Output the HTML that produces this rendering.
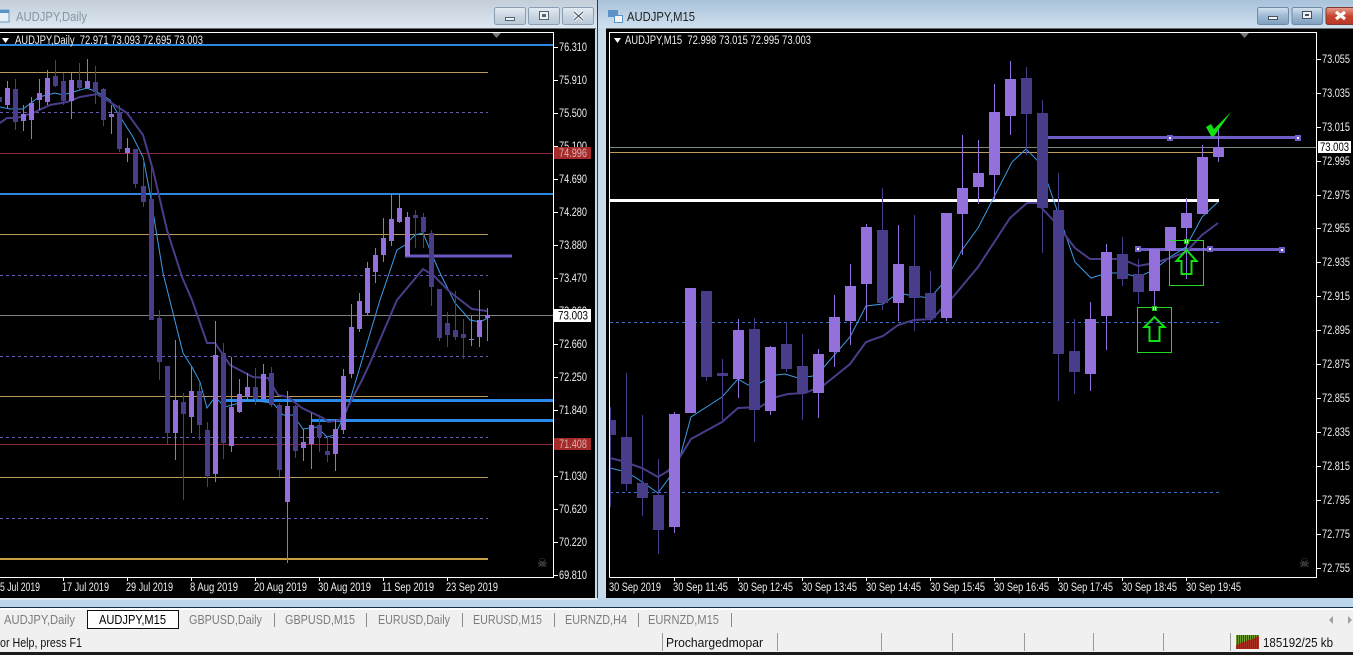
<!DOCTYPE html>
<html><head><meta charset="utf-8"><title>AUDJPY</title>
<style>
html,body{margin:0;padding:0;background:#000;width:1353px;height:655px;overflow:hidden}
svg{display:block;font-family:"Liberation Sans",sans-serif}
.p{font-size:11.5px;fill:#eeeeee}
.tab{font-size:13px;fill:#7c7c7c}
</style></head><body>
<svg width="1353" height="655" viewBox="0 0 1353 655" xmlns="http://www.w3.org/2000/svg">
<defs>
<linearGradient id="tl" x1="0" y1="0" x2="0" y2="1"><stop offset="0" stop-color="#c3ced9"/><stop offset="1" stop-color="#dce7f1"/></linearGradient>
<linearGradient id="tr" x1="0" y1="0" x2="0" y2="1"><stop offset="0" stop-color="#a9c2da"/><stop offset="1" stop-color="#cfe0ef"/></linearGradient>
<linearGradient id="bl" x1="0" y1="0" x2="0" y2="1"><stop offset="0" stop-color="#e4ecf3"/><stop offset=".5" stop-color="#c9d6e2"/><stop offset="1" stop-color="#b9c9d8"/></linearGradient>
<linearGradient id="br" x1="0" y1="0" x2="0" y2="1"><stop offset="0" stop-color="#d5e3f0"/><stop offset=".5" stop-color="#9fb9d2"/><stop offset="1" stop-color="#7f9fbf"/></linearGradient>
<linearGradient id="cl" x1="0" y1="0" x2="0" y2="1"><stop offset="0" stop-color="#e8a090"/><stop offset=".5" stop-color="#c8452f"/><stop offset="1" stop-color="#b8382a"/></linearGradient>
<clipPath id="cL"><rect x="0" y="33" width="554" height="544"/></clipPath>
<clipPath id="cR"><rect x="610" y="33" width="706" height="544"/></clipPath>
</defs>

<!-- window chrome -->
<rect width="1353" height="655" fill="#c6daec"/>
<rect x="0" y="0" width="597" height="28" fill="url(#tl)"/>
<rect x="598" y="0" width="755" height="28" fill="url(#tr)"/>
<rect x="0" y="28" width="596" height="1" fill="#6d6d6d"/>
<rect x="606" y="28" width="747" height="1" fill="#6d6d6d"/>
<rect x="597" y="0" width="1" height="607" fill="#2b3a44"/>
<rect x="0" y="29" width="595" height="569" fill="#000"/>
<rect x="606" y="29" width="747" height="569" fill="#000"/>
<rect x="0" y="598" width="1353" height="9" fill="#bcd5ea"/>
<rect x="0" y="598" width="597" height="2" fill="#dfe9f2"/>
<rect x="0" y="607" width="1353" height="1" fill="#10303c"/>
<rect x="0" y="608" width="1353" height="2" fill="#fff"/>
<rect x="0" y="610" width="1353" height="20" fill="#f0f0f0"/>
<rect x="0" y="630" width="1353" height="23" fill="#f0f0f0"/>
<rect x="0" y="652" width="1353" height="3" fill="#1c1c1c"/>

<!-- title bars -->
<g>
<rect x="-3" y="10" width="12" height="12" fill="#e8f0f8" stroke="#6f9cc8"/>
<rect x="-3" y="10" width="12" height="3" fill="#5b93c9"/>
<text x="16" y="21" font-size="13" fill="#8496a6" textLength="71" lengthAdjust="spacingAndGlyphs">AUDJPY,Daily</text>
<rect x="494.5" y="7.5" width="31" height="17" rx="2" fill="url(#bl)" stroke="#8c9fb2"/>
<rect x="528.5" y="7.5" width="31" height="17" rx="2" fill="url(#bl)" stroke="#8c9fb2"/>
<rect x="562.5" y="7.5" width="31" height="17" rx="2" fill="url(#bl)" stroke="#8c9fb2"/>
<rect x="505.5" y="17.5" width="9" height="3" fill="#eef2f6" stroke="#55636f"/>
<rect x="539.5" y="11.5" width="9" height="8" fill="#eef2f6" stroke="#55636f"/><rect x="542" y="14" width="4" height="3" fill="#55636f"/>
<path d="M574 12l9 8M583 12l-9 8" stroke="#fff" stroke-width="3.4"/><path d="M574 12l9 8M583 12l-9 8" stroke="#5c6a76" stroke-width="1.4"/>
</g>
<g>
<rect x="608.5" y="10.5" width="9" height="6" fill="#5b93c9" stroke="#5b93c9"/>
<rect x="614.5" y="15.5" width="8" height="7" fill="#f2f6fa" stroke="#5b93c9"/>
<text x="627" y="21" font-size="13" fill="#222" textLength="68" lengthAdjust="spacingAndGlyphs">AUDJPY,M15</text>
<rect x="1257.5" y="7.5" width="31" height="17" rx="2" fill="url(#br)" stroke="#6c8aa6"/>
<rect x="1292" y="7.5" width="30.5" height="17" rx="2" fill="url(#br)" stroke="#6c8aa6"/>
<rect x="1326" y="7.5" width="30" height="17" rx="2" fill="url(#cl)" stroke="#7c3a30"/>
<rect x="1268.5" y="16.5" width="9" height="3" fill="#f2f6fa" stroke="#44525f"/>
<rect x="1302.5" y="11.5" width="9" height="7" fill="#eef2f6" stroke="#44525f"/><rect x="1305" y="14" width="4" height="2" fill="#44525f"/>
<path d="M1336 12l9 7M1345 12l-9 7" stroke="#fff" stroke-width="3.2"/>
</g>

<!-- LEFT CHART -->
<g clip-path="url(#cL)">
<g shape-rendering="crispEdges" fill="none">
<path d="M0 72.5H488M0 234.5H488M0 396.5H488M0 477.5H488" stroke="#b8985c"/>
<path d="M0 559H488" stroke="#c8a044" stroke-width="2"/>
<path d="M0 112.5H488M0 275.5H488M0 356.5H488M0 437.5H488M0 518.5H488" stroke="#6a5ab0" stroke-dasharray="3 3"/>
<path d="M0 153.5H554M0 444.5H554" stroke="#8a2a3c"/>
<path d="M0 315.5H554" stroke="#808080"/>
<path d="M0 45H554M0 194H554" stroke="#2f86e2" stroke-width="2"/>
<path d="M226 400.5H554M312 420.5H554" stroke="#2a8aea" stroke-width="3"/>
</g>
<path d="M0 107L10 109 23 109 39 97 55 93 63 95 87 88 97 92 110 100 117 112 133 137 143 157 150 193 163 273 183 353 192 367 200 382 207 408 215 397 225 407 239 403 247 400 273 403 283 415 293 415 303 429 317 427 327 437 335 435 347 410 357 377 380 300 397 250 405 245 415 235 423 233 433 257 440 273 455 303 470 320 480 322 488 318" fill="none" stroke="#3d9be6" stroke-width="1"/>
<path d="M0 123L7 118 17 118 33 113 50 105 67 102 80 97 97 94 110 102 127 113 143 135 153 170 167 230 182 277 192 300 207 343 215 343 230 365 253 377 268 378 278 395 288 397 302 408 323 418 328 422 340 420 350 403 362 380 370 363 397 300 423 269 433 275 450 292 472 309 487 311" fill="none" stroke="#483d8b" stroke-width="2"/>
<path d="M405 256H512" stroke="#6b58c4" stroke-width="3" shape-rendering="crispEdges"/>
<g shape-rendering="crispEdges">
<path fill="none" stroke="#9370db" d="M7.5 81V108M23.5 105V131M31.5 97V139M39.5 79V110M47.5 70V105M71.5 73V119M87.5 59V89M111.5 105V134M127.5 138V162M175.5 340V460M191.5 367V433M215.5 321V482M231.5 357V452M239.5 379V413M247.5 373V400M263.5 364V400M287.5 391V563M303.5 429V461M311.5 413V469M335.5 419V471M343.5 369V434M351.5 304V378M359.5 293V332M367.5 262V315M375.5 248V283M383.5 218V262M391.5 194V246M399.5 194V223M407.5 212V256M471.5 316V346M479.5 290V347M487.5 308V341"/>
<path fill="none" stroke="#483d8b" d="M-.5 90V110M15.5 79V130M55.5 60V87M63.5 73V105M79.5 63V90M95.5 66V104M103.5 88V126M119.5 105V152M135.5 149V188M143.5 160V207M151.5 167V320M159.5 310V380M167.5 366V445M183.5 393V500M199.5 383V440M207.5 422V487M223.5 343V459M255.5 368V405M271.5 367V407M279.5 403V477M295.5 405V458M319.5 415V452M327.5 437V462M415.5 210V248M423.5 213V248M431.5 230V306M439.5 289V341M447.5 312V347M455.5 291V340M463.5 319V359"/>
<path fill="#9370db" d="M5 88h5v17h-5zM21 114h5v7h-5zM29 103h5v17h-5zM37 93h5v7h-5zM45 78h5v24h-5zM69 80h5v21h-5zM85 81h5v7h-5zM109 114h5v3h-5zM125 148h5v5h-5zM173 400h5v33h-5zM189 391h5v26h-5zM213 355h5v119h-5zM229 407h5v39h-5zM237 394h5v18h-5zM245 387h5v10h-5zM261 374h5v25h-5zM285 406h5v96h-5zM301 442h5v6h-5zM309 425h5v19h-5zM333 429h5v25h-5zM341 376h5v54h-5zM349 327h5v47h-5zM357 301h5v28h-5zM365 268h5v45h-5zM373 255h5v17h-5zM381 238h5v17h-5zM389 219h5v22h-5zM397 208h5v14h-5zM405 217h5v39h-5zM469 339h5v1h-5zM477 320h5v17h-5zM485 315h5v3h-5z"/>
<path fill="#483d8b" d="M0 97h2v5h-2zM13 89h5v33h-5zM53 76h5v10h-5zM61 81h5v20h-5zM77 80h5v8h-5zM93 82h5v10h-5zM101 89h5v31h-5zM117 112h5v37h-5zM133 149h5v35h-5zM141 186h5v16h-5zM149 199h5v121h-5zM157 318h5v44h-5zM165 366h5v67h-5zM181 402h5v12h-5zM197 391h5v34h-5zM205 430h5v46h-5zM221 353h5v90h-5zM253 387h5v12h-5zM269 373h5v32h-5zM277 405h5v65h-5zM293 406h5v45h-5zM317 425h5v12h-5zM325 451h5v4h-5zM413 215h5v3h-5zM421 217h5v15h-5zM429 233h5v54h-5zM437 289h5v49h-5zM445 323h5v12h-5zM453 330h5v7h-5zM461 334h5v4h-5z"/>
</g>
<text x="537" y="567" font-size="12" fill="#6e6e6e" font-family="DejaVu Sans">☠</text>
</g>
<path d="M-1 32.5H553.5V577.5H-1" fill="none" stroke="#fff" shape-rendering="crispEdges"/>
<path d="M492 33h9l-4.500 5z" fill="#777"/>
<path d="M2 38h7l-3.500 5z" fill="#fff"/>
<text x="15" y="44" class="p" textLength="188" lengthAdjust="spacingAndGlyphs" xml:space="preserve">AUDJPY,Daily  72.971 73.093 72.695 73.003</text>
<path d="M554 47.500h4M554 80.500h4M554 113.500h4M554 146.500h4M554 179.500h4M554 212.500h4M554 245.500h4M554 278.500h4M554 311.500h4M554 344.500h4M554 377.500h4M554 410.500h4M554 443.500h4M554 476.500h4M554 509.500h4M554 542.500h4M554 575.500h4" stroke="#fff" shape-rendering="crispEdges"/>
<text class="p" x="559" y="51" textLength="28" lengthAdjust="spacingAndGlyphs">76.310</text>
<text class="p" x="559" y="84" textLength="28" lengthAdjust="spacingAndGlyphs">75.910</text>
<text class="p" x="559" y="117" textLength="28" lengthAdjust="spacingAndGlyphs">75.500</text>
<text class="p" x="559" y="150" textLength="28" lengthAdjust="spacingAndGlyphs">75.100</text>
<text class="p" x="559" y="183" textLength="28" lengthAdjust="spacingAndGlyphs">74.690</text>
<text class="p" x="559" y="216" textLength="28" lengthAdjust="spacingAndGlyphs">74.280</text>
<text class="p" x="559" y="249" textLength="28" lengthAdjust="spacingAndGlyphs">73.880</text>
<text class="p" x="559" y="282" textLength="28" lengthAdjust="spacingAndGlyphs">73.470</text>
<text class="p" x="559" y="315" textLength="28" lengthAdjust="spacingAndGlyphs">73.060</text>
<text class="p" x="559" y="348" textLength="28" lengthAdjust="spacingAndGlyphs">72.660</text>
<text class="p" x="559" y="381" textLength="28" lengthAdjust="spacingAndGlyphs">72.250</text>
<text class="p" x="559" y="414" textLength="28" lengthAdjust="spacingAndGlyphs">71.840</text>
<text class="p" x="559" y="480" textLength="28" lengthAdjust="spacingAndGlyphs">71.030</text>
<text class="p" x="559" y="513" textLength="28" lengthAdjust="spacingAndGlyphs">70.620</text>
<text class="p" x="559" y="546" textLength="28" lengthAdjust="spacingAndGlyphs">70.220</text>
<text class="p" x="559" y="579" textLength="28" lengthAdjust="spacingAndGlyphs">69.810</text>
<rect x="554" y="147" width="37" height="12" fill="#a52a2a"/>
<text x="559" y="157" font-size="11.5" fill="#d8b0b0" textLength="28" lengthAdjust="spacingAndGlyphs">74.996</text>
<rect x="554" y="438" width="37" height="12" fill="#a52a2a"/>
<text x="559" y="448" font-size="11.5" fill="#d8b0b0" textLength="28" lengthAdjust="spacingAndGlyphs">71.408</text>
<rect x="554" y="309" width="37" height="13" fill="#fff"/>
<text x="558" y="319.500" font-size="11.5" fill="#000" textLength="30" lengthAdjust="spacingAndGlyphs">73.003</text>
<path d="M63.500 577v4M127.500 577v4M191.500 577v4M255.500 577v4M319.500 577v4M383.500 577v4M447.500 577v4" stroke="#fff" shape-rendering="crispEdges"/>
<text class="p" x="0" y="591" textLength="40" lengthAdjust="spacingAndGlyphs">5 Jul 2019</text>
<text class="p" x="62" y="591" textLength="47" lengthAdjust="spacingAndGlyphs">17 Jul 2019</text>
<text class="p" x="126" y="591" textLength="47" lengthAdjust="spacingAndGlyphs">29 Jul 2019</text>
<text class="p" x="190" y="591" textLength="48" lengthAdjust="spacingAndGlyphs">8 Aug 2019</text>
<text class="p" x="254" y="591" textLength="53" lengthAdjust="spacingAndGlyphs">20 Aug 2019</text>
<text class="p" x="318" y="591" textLength="53" lengthAdjust="spacingAndGlyphs">30 Aug 2019</text>
<text class="p" x="382" y="591" textLength="52" lengthAdjust="spacingAndGlyphs">11 Sep 2019</text>
<text class="p" x="446" y="591" textLength="52" lengthAdjust="spacingAndGlyphs">23 Sep 2019</text>

<!-- RIGHT CHART -->
<g clip-path="url(#cR)">
<g shape-rendering="crispEdges" fill="none">
<path d="M610 147.500H1316" stroke="#7c8c7c"/>
<path d="M610 152.500H1213" stroke="#c09a58"/>
<path d="M610 322.500H1220M610 492.500H1220" stroke="#3d6fc4" stroke-dasharray="3 3"/>
<path d="M610 200.500H1219" stroke="#fff" stroke-width="3"/>
<path d="M1048 137.500H1298M1138 249.500H1282" stroke="#6e5ec8" stroke-width="3"/>
</g>
<path d="M610 468L622 471 635 477 658 493 669 478 680 457 691 417 722 397 738 379 748 385 760 383 776 375 785 374 798 378 813 376 824 367 850 337 866 306 883 304 898 293 914 296 930 298 946 280 962 250 978 228 994 197 1012 162 1026 149 1037 160 1048 184 1058 213 1075 262 1091 278 1107 273 1122 273 1138 277 1154 270 1170 257 1186 247 1202 217 1218 202" fill="none" stroke="#3d9be6" stroke-width="1"/>
<path d="M610 458L622 461 642 468 658 477 668 471 680 457 691 439 722 422 738 408 760 407 776 397 788 394 805 393 824 385 850 364 866 342 883 336 898 325 914 320 932 319 953 297 978 267 1010 218 1027 203 1037 203 1053 220 1065 235 1075 248 1090 259 1122 259 1138 266 1154 263 1170 258 1186 252 1202 235 1218 223" fill="none" stroke="#483d8b" stroke-width="2"/>
<g shape-rendering="crispEdges">
<path fill="none" stroke="#483d8b" d="M610.500 407V507M626.500 373V491M642.500 415V516M658.500 459V554M706.500 291V381M722.500 359V420M754.500 318V442M786.500 322V372M802.500 334V420M882.500 188V310M914.500 215V331M930.500 271V322M1026.500 67V155M1042.500 100V253M1058.500 173V401M1074.500 319V394M1122.500 237V286M1138.500 259V304"/>
<path fill="none" stroke="#9370db" d="M674.500 412V533M738.500 319V398M770.500 346V415M818.500 349V418M834.500 295V367M850.500 264V345M866.500 224V321M898.500 225V321M946.500 213V321M962.500 135V255M978.500 140V204M994.500 84V200M1010.500 61V135M1090.500 302V391M1106.500 244V350M1154.500 249V310M1170.500 227V251M1186.500 198V279M1202.500 145V214M1218.500 127V162"/>
<path fill="#483d8b" d="M605 420h11v15h-11zM621 437h11v47h-11zM637 483h11v15h-11zM653 495h11v35h-11zM701 291h11v86h-11zM717 373h11v3h-11zM749 329h11v81h-11zM781 344h11v25h-11zM797 366h11v27h-11zM877 230h11v73h-11zM909 266h11v32h-11zM925 293h11v25h-11zM1021 78h11v36h-11zM1037 113h11v95h-11zM1053 210h11v144h-11zM1069 351h11v21h-11zM1117 254h11v25h-11zM1133 274h11v18h-11z"/>
<path fill="#9370db" d="M669 414h11v113h-11zM685 288h11v125h-11zM733 330h11v49h-11zM765 347h11v64h-11zM813 354h11v39h-11zM829 317h11v35h-11zM845 286h11v35h-11zM861 227h11v57h-11zM893 264h11v39h-11zM941 213h11v105h-11zM957 188h11v26h-11zM973 173h11v14h-11zM989 112h11v63h-11zM1005 79h11v37h-11zM1085 319h11v55h-11zM1101 252h11v64h-11zM1149 249h11v42h-11zM1165 227h11v24h-11zM1181 213h11v15h-11zM1197 157h11v57h-11zM1213 147h11v10h-11z"/>
<!-- handles -->
<g fill="#6e5ec8"><rect x="1167" y="135" width="6" height="6"/><rect x="1295" y="135" width="6" height="6"/><rect x="1135" y="246" width="6" height="6"/><rect x="1207" y="246" width="6" height="6"/><rect x="1279" y="247" width="6" height="6"/></g>
<g fill="#fff"><rect x="1169" y="137" width="2" height="2"/><rect x="1297" y="137" width="2" height="2"/><rect x="1137" y="248" width="2" height="2"/><rect x="1209" y="248" width="2" height="2"/><rect x="1281" y="249" width="2" height="2"/></g>
<!-- green boxes -->
<rect x="1137.500" y="307.500" width="34" height="45" fill="none" stroke="#22d822"/>
<rect x="1169.500" y="240.500" width="34" height="45" fill="none" stroke="#22d822"/>
<rect x="1152" y="306" width="5" height="5" fill="#1fc41f"/><rect x="1153" y="307" width="1" height="3" fill="#fff"/><rect x="1155" y="307" width="1" height="3" fill="#fff"/>
<rect x="1184" y="239" width="5" height="5" fill="#1fc41f"/><rect x="1185" y="240" width="1" height="3" fill="#fff"/><rect x="1187" y="240" width="1" height="3" fill="#fff"/>
</g>
<path d="M1154.500 317L1144.500 327H1149.500V341H1159.500V327H1164.500Z" fill="none" stroke="#12e012" stroke-width="2"/>
<path d="M1186.500 250L1176.500 261H1181.500V274H1191.500V261H1196.500Z" fill="none" stroke="#12e012" stroke-width="2"/>
<path d="M1206 127L1211 124 1214 129 1231 112 1215 135 1213 137 1211 136Z" fill="#12e012"/>
<text x="1299" y="567" font-size="12" fill="#6e6e6e" font-family="DejaVu Sans">☠</text>
</g>
<path d="M609.500 577.500V32.500H1316.500V577.500H609.500" fill="none" stroke="#fff" shape-rendering="crispEdges"/>
<path d="M1240 33h9l-4.500 5z" fill="#777"/>
<path d="M614 38h7l-3.500 5z" fill="#fff"/>
<text x="625" y="44" class="p" textLength="186" lengthAdjust="spacingAndGlyphs" xml:space="preserve">AUDJPY,M15  72.998 73.015 72.995 73.003</text>
<path d="M1317 59.500h4M1317 93.500h4M1317 127.500h4M1317 161.500h4M1317 195.500h4M1317 228.500h4M1317 262.500h4M1317 296.500h4M1317 330.500h4M1317 364.500h4M1317 398.500h4M1317 432.500h4M1317 466.500h4M1317 500.500h4M1317 534.500h4M1317 568.500h4" stroke="#fff" shape-rendering="crispEdges"/>
<text class="p" x="1322" y="63" textLength="28" lengthAdjust="spacingAndGlyphs">73.055</text>
<text class="p" x="1322" y="97" textLength="28" lengthAdjust="spacingAndGlyphs">73.035</text>
<text class="p" x="1322" y="131" textLength="28" lengthAdjust="spacingAndGlyphs">73.015</text>
<text class="p" x="1322" y="165" textLength="28" lengthAdjust="spacingAndGlyphs">72.995</text>
<text class="p" x="1322" y="199" textLength="28" lengthAdjust="spacingAndGlyphs">72.975</text>
<text class="p" x="1322" y="232" textLength="28" lengthAdjust="spacingAndGlyphs">72.955</text>
<text class="p" x="1322" y="266" textLength="28" lengthAdjust="spacingAndGlyphs">72.935</text>
<text class="p" x="1322" y="300" textLength="28" lengthAdjust="spacingAndGlyphs">72.915</text>
<text class="p" x="1322" y="334" textLength="28" lengthAdjust="spacingAndGlyphs">72.895</text>
<text class="p" x="1322" y="368" textLength="28" lengthAdjust="spacingAndGlyphs">72.875</text>
<text class="p" x="1322" y="402" textLength="28" lengthAdjust="spacingAndGlyphs">72.855</text>
<text class="p" x="1322" y="436" textLength="28" lengthAdjust="spacingAndGlyphs">72.835</text>
<text class="p" x="1322" y="470" textLength="28" lengthAdjust="spacingAndGlyphs">72.815</text>
<text class="p" x="1322" y="504" textLength="28" lengthAdjust="spacingAndGlyphs">72.795</text>
<text class="p" x="1322" y="538" textLength="28" lengthAdjust="spacingAndGlyphs">72.775</text>
<text class="p" x="1322" y="572" textLength="28" lengthAdjust="spacingAndGlyphs">72.755</text>
<rect x="1318" y="141" width="33" height="12" fill="#fff"/>
<text x="1320" y="151" font-size="11.5" fill="#000" textLength="29" lengthAdjust="spacingAndGlyphs">73.003</text>
<path d="M674.500 577v4M738.500 577v4M802.500 577v4M866.500 577v4M930.500 577v4M994.500 577v4M1058.500 577v4M1122.500 577v4M1186.500 577v4" stroke="#fff" shape-rendering="crispEdges"/>
<text class="p" x="609" y="591" textLength="52" lengthAdjust="spacingAndGlyphs">30 Sep 2019</text>
<text class="p" x="673" y="591" textLength="55" lengthAdjust="spacingAndGlyphs">30 Sep 11:45</text>
<text class="p" x="738" y="591" textLength="55" lengthAdjust="spacingAndGlyphs">30 Sep 12:45</text>
<text class="p" x="802" y="591" textLength="55" lengthAdjust="spacingAndGlyphs">30 Sep 13:45</text>
<text class="p" x="866" y="591" textLength="55" lengthAdjust="spacingAndGlyphs">30 Sep 14:45</text>
<text class="p" x="930" y="591" textLength="55" lengthAdjust="spacingAndGlyphs">30 Sep 15:45</text>
<text class="p" x="994" y="591" textLength="55" lengthAdjust="spacingAndGlyphs">30 Sep 16:45</text>
<text class="p" x="1058" y="591" textLength="55" lengthAdjust="spacingAndGlyphs">30 Sep 17:45</text>
<text class="p" x="1122" y="591" textLength="55" lengthAdjust="spacingAndGlyphs">30 Sep 18:45</text>
<text class="p" x="1186" y="591" textLength="55" lengthAdjust="spacingAndGlyphs">30 Sep 19:45</text>

<!-- tabs -->
<rect x="87.500" y="610.500" width="91" height="18" fill="#fff" stroke="#111"/>
<text class="tab" x="4" y="624" textLength="71" lengthAdjust="spacingAndGlyphs">AUDJPY,Daily</text>
<text x="99" y="624" font-size="13" fill="#000" textLength="67" lengthAdjust="spacingAndGlyphs">AUDJPY,M15</text>
<text class="tab" x="189" y="624" textLength="73" lengthAdjust="spacingAndGlyphs">GBPUSD,Daily</text>
<text class="tab" x="285" y="624" textLength="70" lengthAdjust="spacingAndGlyphs">GBPUSD,M15</text>
<text class="tab" x="378" y="624" textLength="72" lengthAdjust="spacingAndGlyphs">EURUSD,Daily</text>
<text class="tab" x="473" y="624" textLength="69" lengthAdjust="spacingAndGlyphs">EURUSD,M15</text>
<text class="tab" x="565" y="624" textLength="62" lengthAdjust="spacingAndGlyphs">EURNZD,H4</text>
<text class="tab" x="648" y="624" textLength="71" lengthAdjust="spacingAndGlyphs">EURNZD,M15</text>
<path d="M274.500 613v14M366.500 613v14M462.500 613v14M554.500 613v14M638.500 613v14M731.500 613v14" stroke="#8a8a8a" shape-rendering="crispEdges"/>
<path d="M1333 616l-4 4 4 4zM1348 616l4 4-4 4z" fill="#a0a0a0"/>
<!-- status -->
<text x="0" y="647" font-size="13" fill="#111" textLength="82" lengthAdjust="spacingAndGlyphs">or Help, press F1</text>
<text x="666" y="647" font-size="13" fill="#111" textLength="97" lengthAdjust="spacingAndGlyphs">Prochargedmopar</text>
<path d="M662.500 633v18M777.500 633v18M881.500 633v18M952.500 633v18M1024.500 633v18M1093.500 633v18M1163.500 633v18M1230.500 633v18" stroke="#9a9a9a" shape-rendering="crispEdges"/>
<g shape-rendering="crispEdges">
<path d="M1236 635h23v14h-23z" fill="#3a4a20"/>
<path d="M1236.500 635v14M1238.500 635v14M1240.500 635v14M1242.500 635v14M1244.500 635v14M1246.500 635v14M1248.500 635v14M1250.500 635v14M1252.500 635v14M1254.500 635v14M1256.500 635v14M1258.500 635v14" stroke="#6f9f2f"/>
<path d="M1236.500 645v4M1238.500 644v5M1240.500 643v6M1242.500 642v7M1244.500 642v7M1246.500 641v8M1248.500 640v9M1250.500 640v9M1252.500 639v10M1254.500 638v11M1256.500 637v12M1258.500 636v13" stroke="#a82f1f"/>
</g>
<text x="1263" y="647" font-size="13" fill="#111" textLength="70" lengthAdjust="spacingAndGlyphs">185192/25 kb</text>
</svg>
</body></html>
